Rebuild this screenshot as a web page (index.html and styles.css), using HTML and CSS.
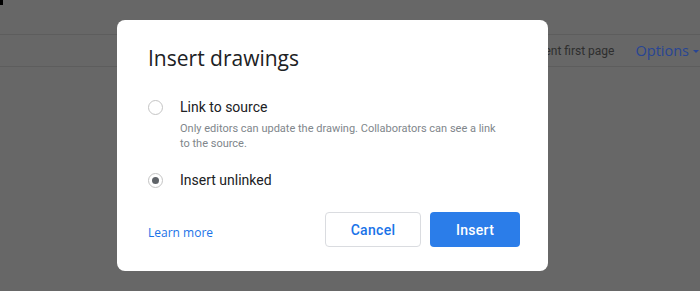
FILE: index.html
```html
<!DOCTYPE html>
<html lang="en">
<head>
  <meta charset="UTF-8">
  <title>Insert drawings</title>
  <link rel="stylesheet" href="styles.css">
</head>
<body>
  <div class="page">
    <div class="topbar"><span class="cursor"></span></div>
    <div class="toolbar">
      <span class="hint">Use a different first page</span>
      <span class="options">Options <span class="caret"></span></span>
    </div>
  </div>

  <div class="dialog">
    <h1>Insert drawings</h1>

    <div class="choice">
      <span class="radio"></span>
      <div class="choice-text">
        <div class="label">Link to source</div>
        <div class="desc">Only editors can update the drawing. Collaborators can see a link to the source.</div>
      </div>
    </div>

    <div class="choice">
      <span class="radio checked"></span>
      <div class="choice-text">
        <div class="label">Insert unlinked</div>
      </div>
    </div>

    <div class="actions">
      <a href="#" class="learn">Learn more</a>
      <div class="buttons">
        <button class="btn btn-cancel">Cancel</button>
        <button class="btn btn-insert">Insert</button>
      </div>
    </div>
  </div>
</body>
</html>
```

FILE: styles.css
```css
html, body {
  margin: 0;
  height: 100%;
}
body {
  background-color: #676767;
  font-family: Roboto, Arial, sans-serif;
  overflow: hidden;
}
.page {
  width: 700px;
}
.topbar {
  height: 34px;
  border-bottom: 1px solid #5d5d5d;
}
.cursor {
  display: block;
  width: 3px;
  height: 5px;
  background-color: #000;
}
.toolbar {
  height: 31px;
  border-bottom: 1px solid #5d5d5d;
  display: flex;
  align-items: center;
  justify-content: flex-end;
  gap: 21px;
  padding-right: 1px;
  white-space: nowrap;
  overflow: hidden;
}
.hint {
  font-size: 12px;
  color: #2e2e2e;
}
.options {
  display: flex;
  align-items: center;
  gap: 4px;
  font-family: "Open Sans", Roboto, sans-serif;
  font-size: 14.5px;
  color: #284594;
}
.caret {
  display: inline-block;
  border-left: 3px solid transparent;
  border-right: 3px solid transparent;
  border-top: 3px solid #284594;
  margin-top: 2px;
}
.dialog {
  position: absolute;
  left: 117px;
  top: 20px;
  width: 431px;
  height: 251px;
  box-sizing: border-box;
  background-color: #fff;
  border-radius: 8px;
  padding: 24px 28px 24px 31px;
}
.dialog h1 {
  margin: 0 0 26px;
  font-family: "Open Sans", Roboto, sans-serif;
  font-weight: 400;
  font-size: 21px;
  line-height: 28px;
  color: #202124;
}
.choice {
  display: flex;
  gap: 17px;
  margin-bottom: 20px;
}
.radio {
  flex: none;
  width: 13px;
  height: 13px;
  border: 1px solid #c4c4c4;
  border-radius: 50%;
  margin-top: 2px;
  position: relative;
}
.radio.checked::after {
  content: "";
  position: absolute;
  left: 3px;
  top: 3px;
  width: 7px;
  height: 7px;
  border-radius: 50%;
  background-color: #5f6368;
}
.label {
  font-size: 14px;
  line-height: 18px;
  color: #202124;
}
.desc {
  margin-top: 5px;
  font-size: 11px;
  line-height: 15px;
  color: #80868b;
  max-width: 322px;
}
.actions {
  display: flex;
  align-items: center;
  justify-content: space-between;
  margin-top: 23px;
}
.learn {
  font-family: "Open Sans", Roboto, sans-serif;
  font-size: 12px;
  font-weight: 500;
  color: #1a73e8;
  text-decoration: none;
  margin-top: 5px;
}
.buttons {
  display: flex;
  gap: 9px;
}
.btn {
  height: 35px;
  border-radius: 4px;
  font-family: Roboto, Arial, sans-serif;
  font-size: 14px;
  font-weight: 500;
  letter-spacing: 0.3px;
  cursor: pointer;
}
.btn-cancel {
  width: 96px;
  background-color: #fff;
  border: 1px solid #dadce0;
  color: #1a73e8;
}
.btn-insert {
  width: 90px;
  background-color: #2b7de9;
  border: none;
  color: #fff;
}
```
